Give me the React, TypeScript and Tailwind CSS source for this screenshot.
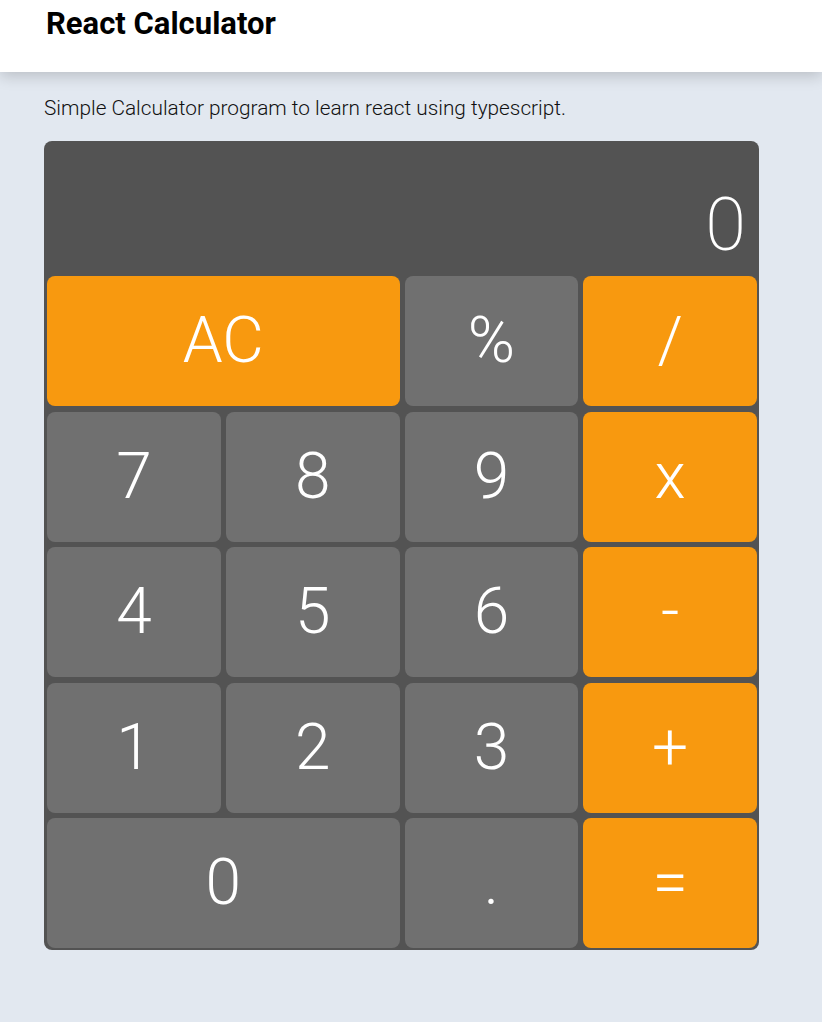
import React, { useState } from "react";

type Key = { label: string; kind: "num" | "op"; span?: boolean };

const KEYS: Key[] = [
  { label: "AC", kind: "op", span: true },
  { label: "%", kind: "num" },
  { label: "/", kind: "op" },
  { label: "7", kind: "num" },
  { label: "8", kind: "num" },
  { label: "9", kind: "num" },
  { label: "x", kind: "op" },
  { label: "4", kind: "num" },
  { label: "5", kind: "num" },
  { label: "6", kind: "num" },
  { label: "-", kind: "op" },
  { label: "1", kind: "num" },
  { label: "2", kind: "num" },
  { label: "3", kind: "num" },
  { label: "+", kind: "op" },
  { label: "0", kind: "num", span: true },
  { label: ".", kind: "num" },
  { label: "=", kind: "op" },
];

const CalcButton: React.FC<{ k: Key; onPress: (v: string) => void }> = ({
  k,
  onPress,
}) => {
  const color = k.kind === "op" ? "bg-[#f8990f]" : "bg-[#707070]";
  const span = k.span ? "col-span-2" : "";
  return (
    <button
      onClick={() => onPress(k.label)}
      className={`${color} ${span} h-[130px] rounded-lg text-white text-[64px] font-light leading-none flex items-center justify-center`}
    >
      {k.label}
    </button>
  );
};

export default function App() {
  const [display, setDisplay] = useState("0");

  const press = (v: string) => {
    if (v === "AC") return setDisplay("0");
    if (v === "=") {
      try {
        const expr = display.replace(/x/g, "*").replace(/%/g, "/100");
        // eslint-disable-next-line no-new-func
        const res = Function(`return (${expr})`)();
        setDisplay(String(res));
      } catch {
        setDisplay("Error");
      }
      return;
    }
    setDisplay((d) => (d === "0" && v !== "." ? v : d + v));
  };

  return (
    <div
      className="min-h-screen bg-[#e2e8f0]"
      style={{ fontFamily: "Roboto, 'Liberation Sans', sans-serif" }}
    >
      <header className="h-[72px] bg-white px-[46px] shadow-[0_4px_14px_rgba(0,0,0,0.18)]">
        <h1 className="pt-[6px] text-[31px] font-bold leading-[36px] text-black">
          React Calculator
        </h1>
      </header>
      <main className="px-[44px] pt-[23px]">
        <p className="text-[20.8px] font-light leading-[26px] text-[#111]">
          Simple Calculator program to learn react using typescript.
        </p>
        <div className="mt-[20px] w-[715px] rounded-lg bg-[#535353] pl-[3px] pr-[2px] pb-[2px]">
          <div className="grid grid-cols-4 gap-x-[5px] gap-y-[5.5px]">
            <div className="col-span-4 h-[129.5px] flex items-end justify-end pr-[11px] pb-[9px]">
              <span className="text-white text-[74px] font-extralight leading-none">
                {display}
              </span>
            </div>
            {KEYS.map((k) => (
              <CalcButton key={k.label} k={k} onPress={press} />
            ))}
          </div>
        </div>
      </main>
    </div>
  );
}
